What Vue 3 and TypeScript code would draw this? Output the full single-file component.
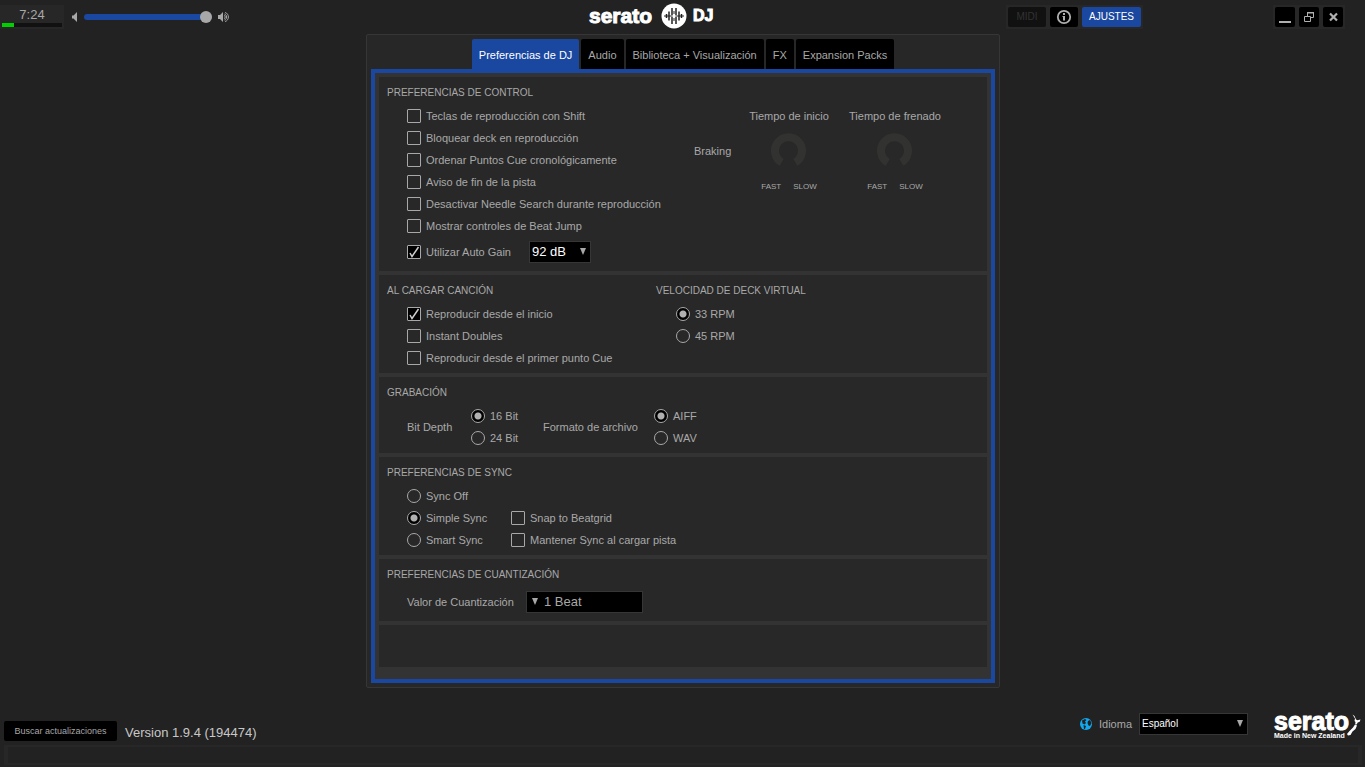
<script setup lang="ts">
import { ref } from 'vue'

interface Option {
  id: string
  label: string
  checked: boolean
}

const tabs = ['Preferencias de DJ', 'Audio', 'Biblioteca + Visualización', 'FX', 'Expansion Packs']
const activeTab = ref(0)
const volume = ref(100)

const controlOptions = ref<Option[]>([
  { id: 'shift', label: 'Teclas de reproducción con Shift', checked: false },
  { id: 'lock', label: 'Bloquear deck en reproducción', checked: false },
  { id: 'sort', label: 'Ordenar Puntos Cue cronológicamente', checked: false },
  { id: 'warn', label: 'Aviso de fin de la pista', checked: false },
  { id: 'needle', label: 'Desactivar Needle Search durante reproducción', checked: false },
  { id: 'jump', label: 'Mostrar controles de Beat Jump', checked: false },
])
const autoGain = ref(true)

const loadOptions = ref<Option[]>([
  { id: 'start', label: 'Reproducir desde el inicio', checked: true },
  { id: 'doubles', label: 'Instant Doubles', checked: false },
  { id: 'cue', label: 'Reproducir desde el primer punto Cue', checked: false },
])
const syncOptions = ref<Option[]>([
  { id: 'snap', label: 'Snap to Beatgrid', checked: false },
  { id: 'keep', label: 'Mantener Sync al cargar pista', checked: false },
])

const rpm = ref('33 RPM')
const depth = ref('16 Bit')
const format = ref('AIFF')
const sync = ref('Simple Sync')
const knobs = ['Tiempo de inicio', 'Tiempo de frenado']
</script>

<template>
  <div class="app">
    <header class="topbar">
      <div class="top-left">
        <div class="clock">
          <span>7:24</span>
          <div class="meter"><div class="meter-fill"></div></div>
        </div>
        <svg class="speaker-low" width="8" height="12" viewBox="0 0 8 12"><path d="M1 4.500h1.500L6 1v10L2.500 7.500H1z" fill="#a8a8a8" /></svg>
        <input v-model="volume" class="volume" type="range" min="0" max="100" aria-label="Volumen" />
        <svg class="speaker-high" width="12" height="12" viewBox="0 0 12 12">
          <path d="M0 4h2l3-3v10L2 8H0z" fill="#a8a8a8" />
          <path d="M6.500 4.200q1.500 1.800 0 3.600M7 1.500c4.500 1 4.500 8 0 9M6.500 3c2.800.8 2.800 5.200 0 6" fill="none" stroke="#a8a8a8" />
        </svg>
      </div>
      <div class="brand">
        <span class="wordmark">serato</span>
        <svg width="26" height="26" viewBox="0 0 26 26">
          <circle cx="13" cy="13" r="12.500" fill="#fff" />
          <path d="M3 13h20" stroke="#222" stroke-width="1" />
          <path d="M5.500 11v4M8 8.500v9M11 5v7M11 14v7M15 5v7M15 14v7M18 8.500v9M20.500 11v4" stroke="#222" stroke-width="1.500" />
          <path d="M13 8v3M13 15v3" stroke="#222" stroke-width="1" />
          <circle cx="13" cy="13" r="1.500" fill="#fff" />
        </svg>
        <span class="dj">DJ</span>
      </div>
      <div class="top-right">
        <div class="group">
          <button class="btn midi" type="button" disabled>MIDI</button>
          <button class="btn info" type="button" aria-label="Información">
            <svg width="16" height="16" viewBox="0 0 16 16">
              <circle cx="8" cy="8" r="6.200" fill="none" stroke="#b0b0b0" stroke-width="1.800" />
              <path d="M7 4h2v2H7zM6.500 7H9v4.500H7V8h-.5z" fill="#b0b0b0" />
            </svg>
          </button>
          <button class="btn settings" type="button">AJUSTES</button>
        </div>
        <div class="group">
          <button class="btn win" type="button" aria-label="Minimizar">
            <svg width="20" height="20" viewBox="0 0 20 20"><path d="M4 14h12v2H4z" fill="#b0b0b0" /></svg>
          </button>
          <button class="btn win" type="button" aria-label="Restaurar">
            <svg width="20" height="20" viewBox="0 0 20 20">
              <path d="M8.500 9V5.500h6v5H12M5.500 9.500h6v5h-6z" fill="none" stroke="#b0b0b0" />
              <path d="M8 5h7v1.500H8z" fill="#b0b0b0" />
            </svg>
          </button>
          <button class="btn win" type="button" aria-label="Cerrar">
            <svg width="20" height="20" viewBox="0 0 20 20"><path d="M7 6.500l7 7M14 6.500l-7 7" stroke="#b0b0b0" stroke-width="2.200" /></svg>
          </button>
        </div>
      </div>
    </header>

    <main class="content">
      <div class="panel">
        <nav class="tabs">
          <button
            v-for="(tab, i) in tabs"
            :key="tab"
            class="tab"
            :class="{ active: i === activeTab }"
            type="button"
            @click="activeTab = i"
          >{{ tab }}</button>
        </nav>
        <div class="frame">
          <section class="section">
            <h2>PREFERENCIAS DE CONTROL</h2>
            <div class="control-grid">
              <div class="indent">
                <label v-for="o in controlOptions" :key="o.id" class="choice">
                  <span class="box">
                    <input v-model="o.checked" type="checkbox" />
                    <svg viewBox="0 0 14 14"><path d="M3 8l2 3.500L11.500 2" /></svg>
                  </span>
                  <span class="text">{{ o.label }}</span>
                </label>
                <div class="tall-row">
                  <label class="choice gain">
                    <span class="box">
                      <input v-model="autoGain" type="checkbox" />
                      <svg viewBox="0 0 14 14"><path d="M3 8l2 3.500L11.500 2" /></svg>
                    </span>
                    <span class="text">Utilizar Auto Gain</span>
                  </label>
                  <div class="select gain-select">
                    <select aria-label="Auto Gain"><option>92 dB</option></select>
                    <svg class="arrow" viewBox="0 0 6 7"><path d="M0 0h6L3 7z" /></svg>
                  </div>
                </div>
              </div>
              <div class="braking">
                <span class="braking-name">Braking</span>
                <div v-for="k in knobs" :key="k" class="knob">
                  <span class="knob-title">{{ k }}</span>
                  <svg width="36" height="36" viewBox="0 0 36 36"><path d="M10.700 29.400A13.500 13.500 0 1 1 24.300 29.400" fill="none" stroke="#323230" stroke-width="8" /></svg>
                  <span class="knob-ends"><span>FAST</span><span>SLOW</span></span>
                </div>
              </div>
            </div>
          </section>

          <section class="section load-grid">
            <div>
              <h2>AL CARGAR CANCIÓN</h2>
              <div class="indent">
                <label v-for="o in loadOptions" :key="o.id" class="choice">
                  <span class="box">
                    <input v-model="o.checked" type="checkbox" />
                    <svg viewBox="0 0 14 14"><path d="M3 8l2 3.500L11.500 2" /></svg>
                  </span>
                  <span class="text">{{ o.label }}</span>
                </label>
              </div>
            </div>
            <div>
              <h2>VELOCIDAD DE DECK VIRTUAL</h2>
              <div class="indent">
                <label v-for="r in ['33 RPM', '45 RPM']" :key="r" class="choice">
                  <input v-model="rpm" type="radio" name="rpm" :value="r" />
                  <span class="text">{{ r }}</span>
                </label>
              </div>
            </div>
          </section>

          <section class="section">
            <h2>GRABACIÓN</h2>
            <div class="indent record-grid">
              <span>Bit Depth</span>
              <div>
                <label v-for="d in ['16 Bit', '24 Bit']" :key="d" class="choice">
                  <input v-model="depth" type="radio" name="depth" :value="d" />
                  <span class="text">{{ d }}</span>
                </label>
              </div>
              <span>Formato de archivo</span>
              <div>
                <label v-for="f in ['AIFF', 'WAV']" :key="f" class="choice">
                  <input v-model="format" type="radio" name="format" :value="f" />
                  <span class="text">{{ f }}</span>
                </label>
              </div>
            </div>
          </section>

          <section class="section">
            <h2>PREFERENCIAS DE SYNC</h2>
            <div class="indent sync-grid">
              <div>
                <label v-for="s in ['Sync Off', 'Simple Sync', 'Smart Sync']" :key="s" class="choice">
                  <input v-model="sync" type="radio" name="sync" :value="s" />
                  <span class="text">{{ s }}</span>
                </label>
              </div>
              <div>
                <label v-for="o in syncOptions" :key="o.id" class="choice">
                  <span class="box">
                    <input v-model="o.checked" type="checkbox" />
                    <svg viewBox="0 0 14 14"><path d="M3 8l2 3.500L11.500 2" /></svg>
                  </span>
                  <span class="text">{{ o.label }}</span>
                </label>
              </div>
            </div>
          </section>

          <section class="section">
            <h2>PREFERENCIAS DE CUANTIZACIÓN</h2>
            <div class="indent tall-row">
              <label class="quant-label" for="quant">Valor de Cuantización</label>
              <div class="select quant-select">
                <select id="quant"><option>1 Beat</option></select>
                <svg class="arrow" viewBox="0 0 6 7"><path d="M0 0h6L3 7z" /></svg>
              </div>
            </div>
          </section>

          <section class="section blank"></section>
        </div>
      </div>
    </main>

    <footer class="footer">
      <div class="foot-row">
        <button class="btn update" type="button">Buscar actualizaciones</button>
        <span class="version">Version 1.9.4 (194474)</span>
        <div class="language">
          <svg width="12" height="12" viewBox="0 0 12 12">
            <circle cx="6" cy="6" r="6" fill="#12a8ee" />
            <path d="M2 2.500L5 1l1.500 1L5 3.500 6 5 4.500 6.500 2.500 5.500zM3.500 7L6 8 5 11H4zM8 3l2-1 1.500 3L10 8 8.500 7.500 7.500 5z" fill="#222" />
          </svg>
          <label for="lang">Idioma</label>
          <div class="select lang-select">
            <select id="lang"><option>Español</option></select>
            <svg class="arrow" viewBox="0 0 6 7"><path d="M0 0h6L3 7z" /></svg>
          </div>
        </div>
        <div class="maker">
          <div class="maker-text">
            <span class="wordmark large">serato</span>
            <span class="made">Made in New Zealand</span>
          </div>
          <svg width="16" height="22" viewBox="0 0 16 22">
            <path d="M6.500.5l2 1.500L10 5.500l1.500.8 3-.8-.8 2.200-2 .8-1 2-1.500-.3.3-2.200-1-1L9 4.500zM9 10.500l2 1L9.500 15l-3 2.500L4.500 21 2 21.500 1 20l2.500-3L7 13.500z" fill="#fff" />
          </svg>
        </div>
      </div>
      <div class="status"></div>
    </footer>
  </div>
</template>

<style>
body {
  margin: 0;
  background: #222;
}
</style>

<style scoped>
.app {
  display: flex;
  flex-direction: column;
  min-height: 100vh;
  background: #222;
  color: #a8a8a8;
  font: 11px/14px "Liberation Sans", Arial, sans-serif;
}
.app,
.app * {
  box-sizing: border-box;
}
button,
select,
input {
  margin: 0;
  font: inherit;
  color: inherit;
}

.topbar {
  display: grid;
  grid-template-columns: 1fr auto 1fr;
  align-items: center;
  height: 34px;
}
.top-left {
  display: flex;
  align-items: center;
}
.clock {
  width: 64px;
  height: 24px;
  padding: 2px 2px 0;
  background: #272727;
  text-align: center;
  font-size: 13px;
  line-height: 16px;
}
.clock span {
  display: block;
}
.meter {
  height: 4px;
  background: #111;
}
.meter-fill {
  width: 20%;
  height: 100%;
  background: #00d000;
}
.speaker-low {
  margin: 0 5px 0 7px;
}
.volume {
  appearance: none;
  width: 128px;
  height: 12px;
  background: transparent;
}
.volume::-webkit-slider-runnable-track {
  height: 6px;
  border-radius: 3px;
  background: #1a479f;
}
.volume::-webkit-slider-thumb {
  appearance: none;
  width: 12px;
  height: 12px;
  margin-top: -3px;
  border-radius: 50%;
  background: #a8a8a8;
}
.speaker-high {
  margin-left: 6px;
}
.brand {
  display: flex;
  align-items: center;
  width: 187px;
  padding-bottom: 2px;
  color: #fff;
  font-weight: bold;
}
.brand svg {
  margin: 0 6px;
}
.wordmark {
  width: 66px;
  font-size: 21px;
  font-weight: bold;
  line-height: 24px;
  color: #fff;
  -webkit-text-stroke: 1px #fff;
}
.dj {
  font-size: 16px;
  -webkit-text-stroke: 1px #fff;
}
.top-right {
  display: flex;
  justify-content: flex-end;
  gap: 130px;
  padding-right: 20px;
}
.group {
  display: flex;
  gap: 4px;
  padding: 2px;
  background: #272727;
}
.btn {
  display: flex;
  align-items: center;
  justify-content: center;
  height: 20px;
  padding: 0 9px;
  border: 0;
  border-radius: 2px;
  background: #000;
  font-size: 10px;
}
.midi {
  width: 38px;
  padding: 0;
  background: #111;
  color: #333;
}
.info {
  width: 28px;
  padding: 0;
}
.settings {
  width: 59px;
  padding: 0;
  background: #1a479f;
  color: #fff;
}
.win {
  width: 20px;
  padding: 0;
}

.content {
  padding-left: 1px;
}
.panel {
  width: 634px;
  max-width: 100%;
  margin: 0 auto;
  padding: 4px;
  border: 1px solid #363636;
  border-radius: 2px;
  background: #272727;
}
.tabs {
  display: flex;
  justify-content: center;
  gap: 2px;
}
.tab {
  height: 30px;
  padding: 1px 7px 0;
  border: 0;
  border-radius: 2px 2px 0 0;
  background: #000;
}
.tab.active {
  background: #1a479f;
  color: #fff;
}
.frame {
  display: flex;
  flex-direction: column;
  gap: 4px;
  padding: 4px 4px 12px;
  border: 4px solid #1a479f;
  background: #333;
}
.section {
  padding: 8px 8px 4px;
  background: #282828;
}
.blank {
  height: 42px;
}
h2 {
  margin: 0 0 4px;
  font-size: 10px;
  font-weight: normal;
  line-height: 16px;
}
.indent {
  padding-left: 20px;
}
.control-grid {
  display: grid;
  grid-template-columns: 307px auto;
  justify-content: start;
}
.choice {
  display: flex;
  align-items: center;
  gap: 5px;
  height: 22px;
  white-space: nowrap;
}
.text {
  line-height: 16px;
}
.box {
  display: grid;
}
.box > * {
  grid-area: 1 / 1;
}
.box svg {
  width: 14px;
  height: 14px;
  fill: none;
  stroke: #ccc;
  stroke-width: 1.5;
  pointer-events: none;
  visibility: hidden;
}
.box input:checked + svg {
  visibility: visible;
}
input[type='checkbox'],
input[type='radio'] {
  appearance: none;
  width: 14px;
  height: 14px;
  border: 1px solid #a8a8a8;
  border-radius: 1px;
}
input[type='radio'] {
  border-radius: 50%;
}
input[type='checkbox']:checked {
  background: #000;
}
input[type='radio']:checked {
  background: radial-gradient(circle, #b0b0b0 0 3px, #000 4px);
}
.tall-row {
  display: flex;
  align-items: center;
  height: 30px;
}
.gain {
  width: 122px;
}
.select {
  position: relative;
  height: 22px;
  color: #fff;
}
.select select {
  appearance: none;
  width: 100%;
  height: 100%;
  padding: 0 2px;
  border: 1px solid #363636;
  border-radius: 0;
  background: #000;
}
.arrow {
  position: absolute;
  top: 7px;
  right: 5px;
  width: 6px;
  height: 7px;
  fill: #a8a8a8;
  pointer-events: none;
}
.gain-select {
  width: 62px;
  font-size: 13px;
}
.quant-label {
  width: 119px;
}
.quant-select {
  width: 117px;
  font-size: 13px;
  color: #a8a8a8;
}
.quant-select select {
  padding-left: 17px;
}
.quant-select .arrow {
  right: auto;
  left: 6px;
}
.braking {
  display: flex;
}
.braking-name {
  width: 42px;
  margin-top: 39px;
}
.knob {
  display: flex;
  flex-direction: column;
  align-items: center;
  width: 106px;
}
.knob-title {
  line-height: 22px;
}
.knob svg {
  margin: 6px 0 12px;
}
.knob-ends {
  display: flex;
  gap: 12px;
  font-size: 8px;
  line-height: 12px;
}
.load-grid {
  display: grid;
  grid-template-columns: 269px auto;
  justify-content: start;
}
.record-grid {
  display: grid;
  grid-template-columns: 64px 72px 111px auto;
  align-items: center;
  justify-content: start;
}
.sync-grid {
  display: grid;
  grid-template-columns: 104px auto;
  align-items: end;
  justify-content: start;
}

.footer {
  margin-top: auto;
  padding: 0 3px 2px 4px;
}
.foot-row {
  display: flex;
  align-items: center;
  height: 34px;
}
.update {
  margin-top: 6px;
  width: 113px;
  padding: 0;
  font-size: 9px;
}
.version {
  margin: 10px auto 0 8px;
  font-size: 13px;
  line-height: 16px;
  color: #c8c8c8;
}
.language {
  display: flex;
  align-items: center;
  margin-bottom: 8px;
}
.language label {
  width: 40px;
  margin-left: 7px;
}
.lang-select {
  width: 109px;
  font-size: 10px;
}
.maker {
  display: flex;
  align-items: center;
  margin-left: 26px;
  margin-bottom: 6px;
}
.maker-text {
  display: flex;
  flex-direction: column;
  width: 72px;
  color: #fff;
}
.large {
  width: auto;
  font-size: 25px;
  line-height: 20px;
}
.made {
  font-size: 7px;
  font-weight: bold;
  line-height: 9px;
  white-space: nowrap;
}
.status {
  height: 20px;
  border: 2px solid #272727;
  border-width: 2px 4px;
}
</style>
